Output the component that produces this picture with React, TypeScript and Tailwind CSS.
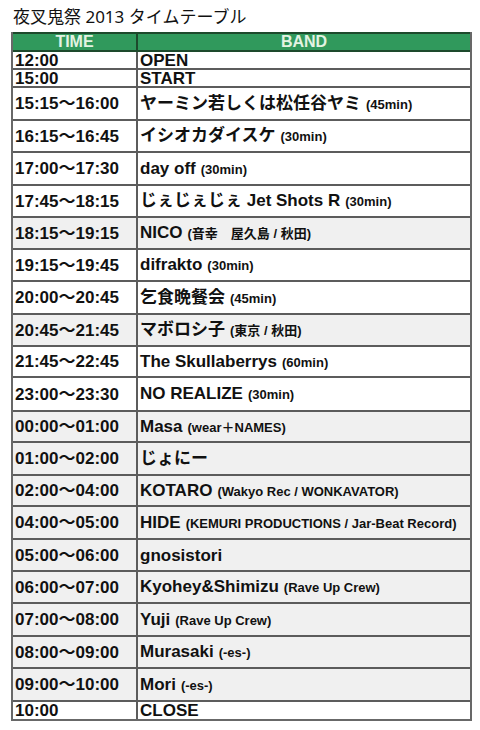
const rows = [
  { time: "12:00", name: "OPEN", h: "h-[18px]" },
  { time: "15:00", name: "START", h: "h-[18px]" },
  { time: "15:15〜16:00", name: "ヤーミン若しくは松任谷ヤミ", note: "(45min)", h: "h-[33px]" },
  { time: "16:15〜16:45", name: "イシオカダイスケ", note: "(30min)", h: "h-[32px]" },
  { time: "17:00〜17:30", name: "day off", note: "(30min)", h: "h-[33px]" },
  { time: "17:45〜18:15", name: "じぇじぇじぇ Jet Shots R", note: "(30min)", h: "h-[32px]" },
  { time: "18:15〜19:15", name: "NICO", note: "(音幸　屋久島 / 秋田)", h: "h-[32px]", gray: true },
  { time: "19:15〜19:45", name: "difrakto", note: "(30min)", h: "h-[32px]" },
  { time: "20:00〜20:45", name: "乞食晩餐会", note: "(45min)", h: "h-[33px]" },
  { time: "20:45〜21:45", name: "マボロシ子", note: "(東京 / 秋田)", h: "h-[32px]", gray: true },
  { time: "21:45〜22:45", name: "The Skullaberrys", note: "(60min)", h: "h-[31px]" },
  { time: "23:00〜23:30", name: "NO REALIZE", note: "(30min)", h: "h-[34px]" },
  { time: "00:00〜01:00", name: "Masa", note: "(wear＋NAMES)", h: "h-[31px]", gray: true },
  { time: "01:00〜02:00", name: "じょにー", h: "h-[33px]", gray: true },
  { time: "02:00〜04:00", name: "KOTARO", note: "(Wakyo Rec / WONKAVATOR)", h: "h-[31px]", gray: true },
  { time: "04:00〜05:00", name: "HIDE", note: "(KEMURI PRODUCTIONS / Jar-Beat Record)", h: "h-[33px]", gray: true },
  { time: "05:00〜06:00", name: "gnosistori", h: "h-[32px]", gray: true },
  { time: "06:00〜07:00", name: "Kyohey&Shimizu", note: "(Rave Up Crew)", h: "h-[32px]", gray: true },
  { time: "07:00〜08:00", name: "Yuji", note: "(Rave Up Crew)", h: "h-[33px]", gray: true },
  { time: "08:00〜09:00", name: "Murasaki", note: "(-es-)", h: "h-[32px]", gray: true },
  { time: "09:00〜10:00", name: "Mori", note: "(-es-)", h: "h-[33px]", gray: true },
  { time: "10:00", name: "CLOSE", h: "h-[17px]", last: true },
];

export default function App() {
  return (
    <div className="w-[480px] h-[730px] bg-white text-[#111] font-['Liberation_Sans','Noto_Sans_CJK_JP',sans-serif]">
      <div className="h-[32px] pl-[13px] pt-[7px] text-[17px] leading-[19px] font-['Noto_Sans','Noto_Sans_CJK_JP',sans-serif]">
        夜叉鬼祭 2013 タイムテーブル
      </div>
      <div className="ml-[11px] w-[461px] border-2 border-t-0 border-[#686868]">
        <div className="flex h-[20px] bg-[#30995c] border-y-2 border-[#1d4a2c] text-[16px] leading-[16px] font-bold text-[#e2f3e2]">
          <div className="w-[125px] border-r-2 border-[#1d4a2c] text-center">TIME</div>
          <div className="flex-1 text-center">BAND</div>
        </div>
        {rows.map((r) => (
          <div
            key={r.time}
            className={`flex items-center ${r.h} ${r.last ? "" : "border-b-2 border-[#5c5c5c]"} ${
              r.gray ? "bg-[#f0f0f0]" : "bg-white"
            }`}
          >
            <div className="w-[125px] h-full flex items-center pl-[2px] border-r-2 border-[#5c5c5c] text-[17px] font-bold leading-[17px]">
              {r.time}
            </div>
            <div className="flex-1 flex items-baseline pl-[2px] font-bold leading-[17px] whitespace-nowrap">
              <span className="text-[17px]">{r.name}</span>
              {r.note && <span className="ml-[5px] text-[13px]">{r.note}</span>}
            </div>
          </div>
        ))}
      </div>
    </div>
  );
}
